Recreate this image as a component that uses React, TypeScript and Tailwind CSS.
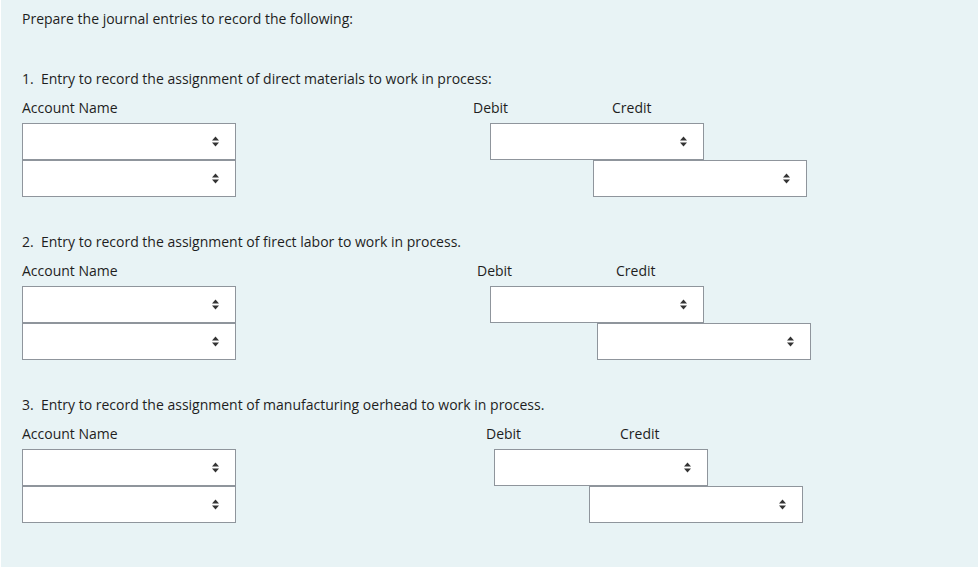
import React from 'react';

const Arrows = () => (
  <svg width="7" height="11" viewBox="0 0 7 11" className="text-[#333]">
    <path d="M0 4.5 L3.5 0.5 L7 4.5 Z" fill="currentColor" />
    <path d="M0 6.5 L7 6.5 L3.5 10.5 Z" fill="currentColor" />
  </svg>
);

const SelectBox = () => (
  <div className="w-[214px] h-[37px] border border-[#8f959c] bg-white flex items-center justify-end pr-[16px]">
    <Arrows />
  </div>
);

// rows built explicitly so debit/credit offsets match the sheet
const EntryRows = ({ debitBoxX, creditBoxX }: { debitBoxX: number; creditBoxX: number }) => (
  <div className="mt-[5px]">
    <div className="flex">
      <SelectBox />
      <div style={{ marginLeft: debitBoxX - 236 }}>
        <SelectBox />
      </div>
    </div>
    <div className="flex">
      <SelectBox />
      <div style={{ marginLeft: creditBoxX - 236 }}>
        <SelectBox />
      </div>
    </div>
  </div>
);

interface SectionProps {
  title: string;
  debitLabelX: number;
  creditLabelX: number;
  debitBoxX: number;
  creditBoxX: number;
  first?: boolean;
}

const Section = ({ title, debitLabelX, creditLabelX, debitBoxX, creditBoxX, first }: SectionProps) => (
  <div className={first ? 'mt-[40px]' : 'mt-[35px]'}>
    <p className="h-[20px] leading-[20px] whitespace-pre">{title}</p>
    <div className="mt-[9px] flex h-[20px] leading-[20px]">
      <span style={{ width: debitLabelX - 22 }}>Account Name</span>
      <span style={{ width: creditLabelX - debitLabelX }}>Debit</span>
      <span>Credit</span>
    </div>
    <EntryRows debitBoxX={debitBoxX} creditBoxX={creditBoxX} />
  </div>
);

export default function App() {
  return (
    <div className="w-[978px] h-[567px] bg-white pl-[1px]">
      <div
        className="h-full bg-[#e8f3f5] pt-[9px] pl-[21px] text-[14px] text-[#1e1e1e]"
        style={{ fontFamily: '"Open Sans", "Noto Sans", sans-serif' }}
      >
        <p className="h-[20px] leading-[20px]">Prepare the journal entries to record the following:</p>
        <Section
          first
          title="1.  Entry to record the assignment of direct materials to work in process:"
          debitLabelX={473}
          creditLabelX={612}
          debitBoxX={490}
          creditBoxX={593}
        />
        <Section
          title="2.  Entry to record the assignment of firect labor to work in process."
          debitLabelX={477}
          creditLabelX={616}
          debitBoxX={490}
          creditBoxX={597}
        />
        <Section
          title="3.  Entry to record the assignment of manufacturing oerhead to work in process."
          debitLabelX={486}
          creditLabelX={620}
          debitBoxX={494}
          creditBoxX={589}
        />
      </div>
    </div>
  );
}
